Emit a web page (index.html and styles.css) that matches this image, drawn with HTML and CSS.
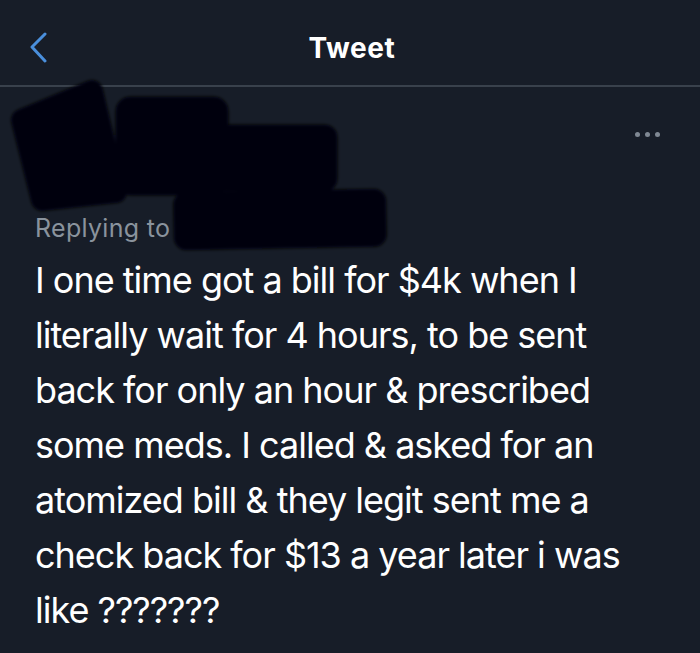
FILE: index.html
```html
<!DOCTYPE html>
<html lang="en">

<head>
    <meta charset="UTF-8">
    <meta name="viewport" content="width=device-width, initial-scale=1.0">
    <title>Tweet</title>
    <link rel="stylesheet" href="styles.css">
</head>

<body>
    <div class="screen">

        <header class="topbar">
            <span class="back">
                <svg width="20" height="32" viewBox="0 0 20 32">
                    <polyline points="16,2 3,15 16,29" fill="none" stroke="#4a8fdc" stroke-width="3" stroke-linecap="round" stroke-linejoin="round" />
                </svg>
            </span>
            <h1 class="title">Tweet</h1>
        </header>

        <main class="tweet">
            <div class="author">
                <span class="more">
                    <i></i><i></i><i></i>
                </span>
            </div>
            <div class="reply">Replying to <span class="handle">@</span></div>
            <p class="tweet-text">I one time got a bill for $4k when I literally wait for 4 hours, to be sent back for only an hour &amp; prescribed some meds. I called &amp; asked for an atomized bill &amp; they legit sent me a check back for $13 a year later i was like ???????</p>
        </main>

        <!-- scribbled-out avatar / name / handle -->
        <svg class="redact" width="400" height="180" viewBox="0 75 400 180">
            <defs>
                <filter id="soft" x="-10%" y="-10%" width="120%" height="120%">
                    <feGaussianBlur stdDeviation="1.4" />
                </filter>
            </defs>
            <g fill="#050609" stroke="#050609" stroke-linejoin="round" filter="url(#soft)">
                <polygon points="22,120 92,91 116,192 42,200" stroke-width="22" />
                <rect x="116" y="97" width="112" height="98" rx="14" />
                <rect x="200" y="125" width="137" height="66" rx="12" />
                <rect x="174" y="191" width="212" height="57" rx="12" transform="rotate(-1 280 220)" />
            </g>
        </svg>

    </div>
</body>

</html>
```

FILE: styles.css
```css
body {
    margin: 0;
    background-color: #171d28;
    font-family: 'Inter', 'Roboto', sans-serif;
    color: #fff;
}

.screen {
    position: relative;
    width: 700px;
    height: 653px;
    overflow: hidden;
}

.topbar {
    position: relative;
    height: 85px;
    display: flex;
    align-items: center;
    justify-content: center;
    border-bottom: 2px solid #39414c;
}

.back {
    position: absolute;
    left: 29px;
    top: 32px;
    display: flex;
}

.title {
    margin: 0;
    font-size: 28px;
    font-weight: 700;
    letter-spacing: 0.6px;
    padding-top: 10px;
    padding-left: 4px;
}

.tweet {
    padding: 0 35px;
}

.author {
    height: 126px;
    display: flex;
    justify-content: flex-end;
}

.more {
    display: flex;
    gap: 5px;
    margin-top: 45px;
    margin-right: 5px;
}

.more i {
    width: 5px;
    height: 5px;
    border-radius: 50%;
    background-color: #7f8893;
}

.reply {
    font-size: 25px;
    line-height: 30px;
    letter-spacing: 0.3px;
    color: #8a939d;
}

.handle {
    color: #58616c;
}

.tweet-text {
    margin: 10px 0 0;
    width: 615px;
    font-size: 36px;
    line-height: 55px;
    letter-spacing: -1px;
}

.redact {
    position: absolute;
    left: 0;
    top: 75px;
}
```
